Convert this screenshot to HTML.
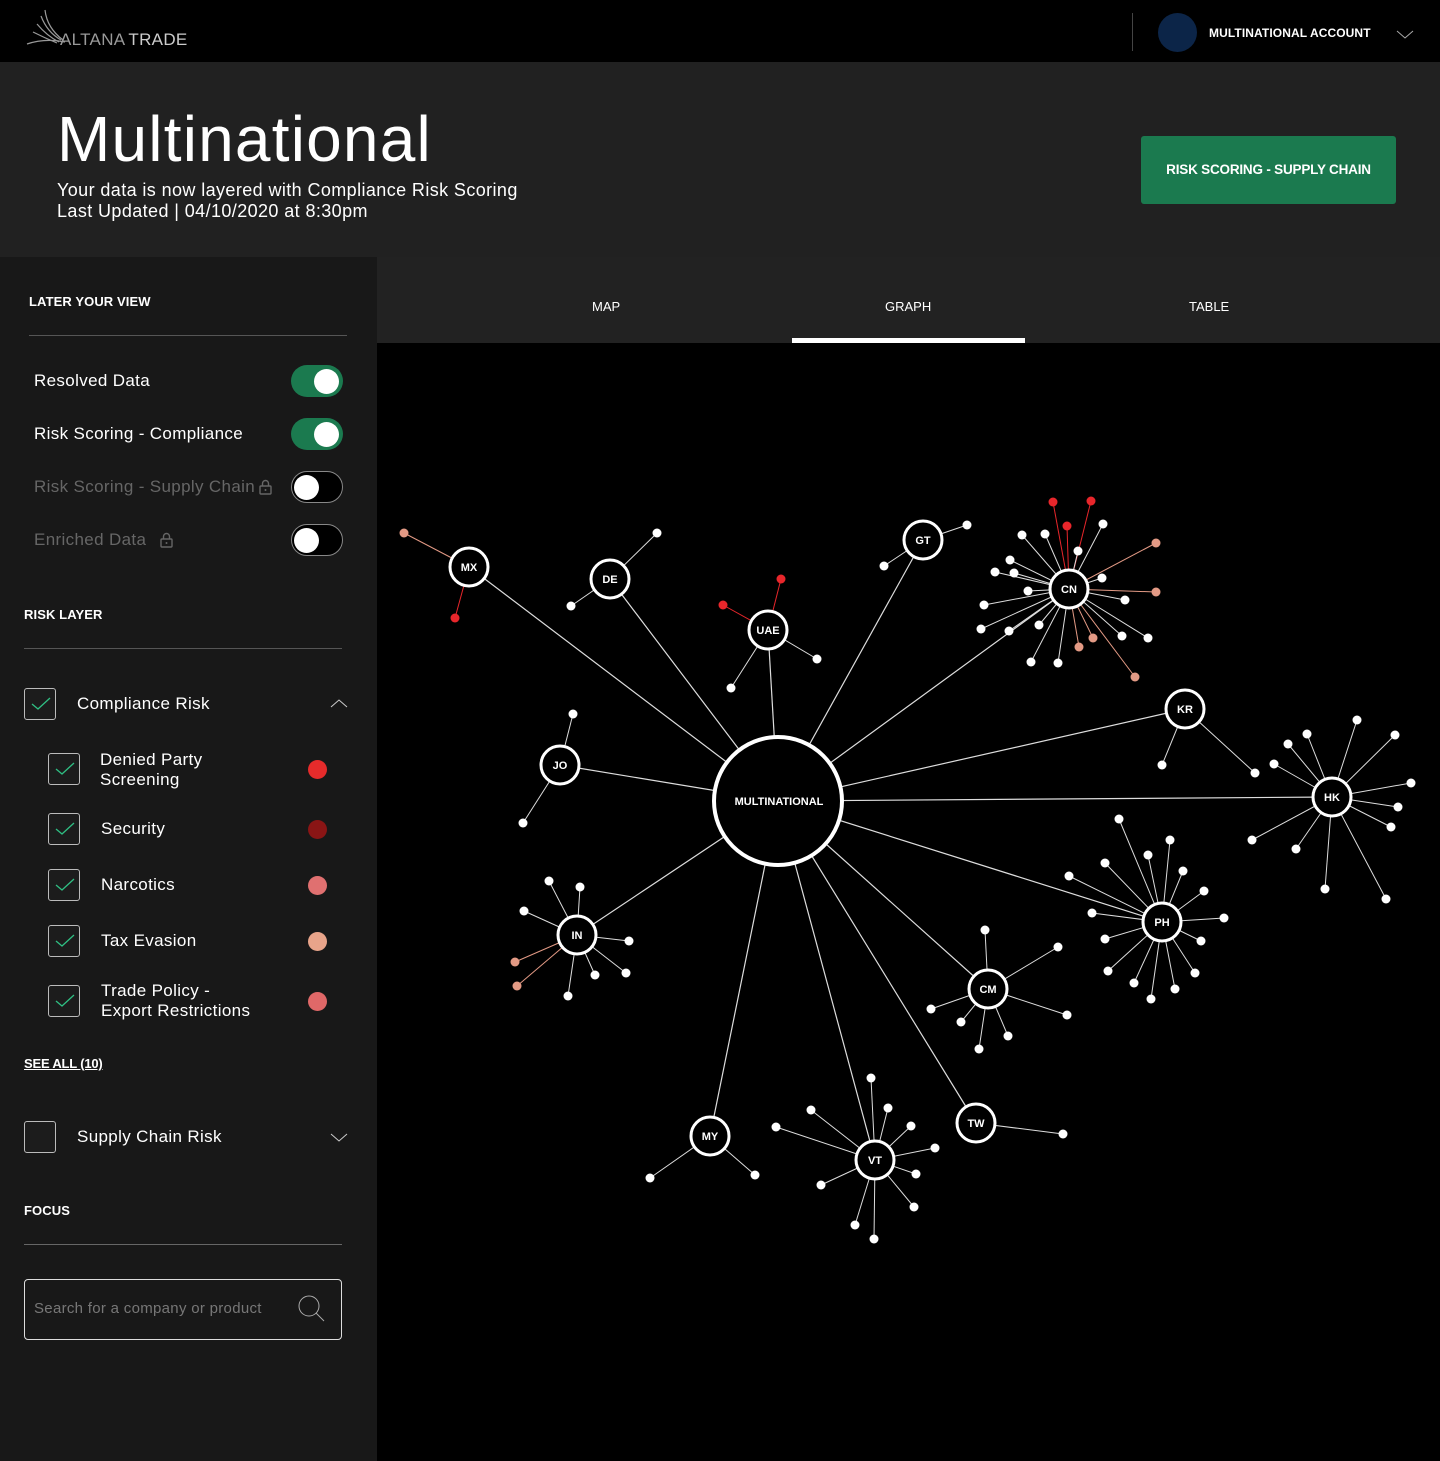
<!DOCTYPE html>
<html><head><meta charset="utf-8"><style>
*{margin:0;padding:0;box-sizing:border-box}
body{width:1440px;height:1461px;background:#000;font-family:"Liberation Sans",sans-serif;color:#fff;position:relative;overflow:hidden}
.a{position:absolute}
.t{font-size:17px;letter-spacing:0.35px}
.cb{position:absolute;width:32px;height:32px;border:1.5px solid #bbb;border-radius:3px;background:#1c1c1c}
.cb svg{position:absolute;left:6px;top:8px}
.dot{position:absolute;width:19px;height:19px;border-radius:50%}
.tg{position:absolute;width:52px;height:32px;border-radius:16px}
.tg i{position:absolute;top:4px;width:25px;height:25px;border-radius:50%;background:#fff}
.h{font-weight:bold;font-size:13px;letter-spacing:.1px}
.ln{position:absolute;height:1px;background:#555}
</style></head><body>
<div class="a" style="left:0;top:0;width:1440px;height:62px;background:#000"></div>
<svg class="a" style="left:25px;top:8px" width="45" height="40" viewBox="0 0 45 40"><g fill="none" stroke="#999" stroke-width="1.2"><path d="M2 36 Q20 30 40 34"/><path d="M20 2 Q22 20 38 32"/><path d="M16 8 Q22 24 36 32"/><path d="M12 16 Q22 28 34 34"/><path d="M8 24 Q20 30 32 35"/></g></svg>
<div class="a" style="left:60px;top:30px;font-size:17px;color:#999;letter-spacing:0.3px">ALTANA<span style="color:#ccc;margin-left:3px">TRADE</span></div>
<div class="a" style="left:1132px;top:13px;width:1px;height:38px;background:#444"></div>
<div class="a" style="left:1158px;top:13px;width:39px;height:39px;border-radius:50%;background:#0c2548"></div>
<div class="a h" style="left:1209px;top:26px;font-size:12px">MULTINATIONAL ACCOUNT</div>
<svg class="a" style="left:1396px;top:30px" width="18" height="10"><path d="M1 1 L9 8 L17 1" stroke="#aaa" fill="none"/></svg>
<div class="a" style="left:0;top:62px;width:1440px;height:195px;background:#212121"></div>
<div class="a" style="left:57px;top:101px;font-size:64px;line-height:76px;letter-spacing:1.2px">Multinational</div>
<div class="a" style="left:57px;top:180px;font-size:18px;line-height:21px;letter-spacing:0.4px">Your data is now layered with Compliance Risk Scoring<br>Last Updated | 04/10/2020 at 8:30pm</div>
<div class="a" style="left:1141px;top:136px;width:255px;height:68px;background:#1b7a4f;border-radius:3px;font-weight:bold;font-size:13.5px;text-align:center;line-height:68px;letter-spacing:-0.2px">RISK SCORING - SUPPLY CHAIN</div>
<div class="a" style="left:0;top:257px;width:377px;height:1204px;background:#181818"></div>
<div class="a h" style="left:29px;top:294px">LATER YOUR VIEW</div>
<div class="ln" style="left:29px;top:335px;width:318px"></div>
<div class="a t" style="left:34px;top:371px">Resolved Data</div>
<div class="tg" style="left:291px;top:365px;background:#1b7a4f"><i style="left:23px"></i></div>
<div class="a t" style="left:34px;top:424px">Risk Scoring - Compliance</div>
<div class="tg" style="left:291px;top:418px;background:#1b7a4f"><i style="left:23px"></i></div>
<div class="a t" style="left:34px;top:477px;color:#666">Risk Scoring - Supply Chain</div>
<svg class="a" style="left:259px;top:479px" width="13" height="16"><path d="M3.5 7 V4.5 A3 3 0 0 1 9.5 4.5 V7" stroke="#666" fill="none" stroke-width="1.4"/><rect x="1" y="7" width="11" height="8" rx="1" stroke="#666" fill="none" stroke-width="1.4"/><circle cx="6.5" cy="11" r="1" fill="#666"/></svg>
<div class="tg" style="left:291px;top:471px;background:#000;border:1px solid #888"><i style="left:2px;top:3px"></i></div>
<div class="a t" style="left:34px;top:530px;color:#666">Enriched Data</div>
<svg class="a" style="left:160px;top:532px" width="13" height="16"><path d="M3.5 7 V4.5 A3 3 0 0 1 9.5 4.5 V7" stroke="#666" fill="none" stroke-width="1.4"/><rect x="1" y="7" width="11" height="8" rx="1" stroke="#666" fill="none" stroke-width="1.4"/><circle cx="6.5" cy="11" r="1" fill="#666"/></svg>
<div class="tg" style="left:291px;top:524px;background:#000;border:1px solid #888"><i style="left:2px;top:3px"></i></div>
<div class="a h" style="left:24px;top:607px">RISK LAYER</div>
<div class="ln" style="left:24px;top:648px;width:318px"></div>
<div class="cb" style="left:24px;top:688px"><svg width="20" height="14"><path d="M1 7 L7 12 L19 1" stroke="#2fbf83" fill="none" stroke-width="1.3"/></svg></div>
<div class="a t" style="left:77px;top:694px">Compliance Risk</div>
<svg class="a" style="left:330px;top:698px" width="18" height="10"><path d="M1 9 L9 2 L17 9" stroke="#ccc" fill="none"/></svg>
<div class="cb" style="left:48px;top:753px"><svg width="20" height="14"><path d="M1 7 L7 12 L19 1" stroke="#2fbf83" fill="none" stroke-width="1.3"/></svg></div>
<div class="a t" style="left:100px;top:750px;line-height:20px">Denied Party<br>Screening</div>
<div class="dot" style="left:308px;top:760px;background:#e62b2b"></div>
<div class="cb" style="left:48px;top:813px"><svg width="20" height="14"><path d="M1 7 L7 12 L19 1" stroke="#2fbf83" fill="none" stroke-width="1.3"/></svg></div>
<div class="a t" style="left:101px;top:819px">Security</div>
<div class="dot" style="left:308px;top:820px;background:#8a1515"></div>
<div class="cb" style="left:48px;top:869px"><svg width="20" height="14"><path d="M1 7 L7 12 L19 1" stroke="#2fbf83" fill="none" stroke-width="1.3"/></svg></div>
<div class="a t" style="left:101px;top:875px">Narcotics</div>
<div class="dot" style="left:308px;top:876px;background:#e07070"></div>
<div class="cb" style="left:48px;top:925px"><svg width="20" height="14"><path d="M1 7 L7 12 L19 1" stroke="#2fbf83" fill="none" stroke-width="1.3"/></svg></div>
<div class="a t" style="left:101px;top:931px">Tax Evasion</div>
<div class="dot" style="left:308px;top:932px;background:#e8a48a"></div>
<div class="cb" style="left:48px;top:985px"><svg width="20" height="14"><path d="M1 7 L7 12 L19 1" stroke="#2fbf83" fill="none" stroke-width="1.3"/></svg></div>
<div class="a t" style="left:101px;top:981px;line-height:20px">Trade Policy -<br>Export Restrictions</div>
<div class="dot" style="left:308px;top:992px;background:#e06868"></div>
<div class="a h" style="left:24px;top:1056px;text-decoration:underline;letter-spacing:-0.2px">SEE ALL (10)</div>
<div class="cb" style="left:24px;top:1121px"></div>
<div class="a t" style="left:77px;top:1127px">Supply Chain Risk</div>
<svg class="a" style="left:330px;top:1133px" width="18" height="10"><path d="M1 1 L9 8 L17 1" stroke="#ccc" fill="none"/></svg>
<div class="a h" style="left:24px;top:1203px">FOCUS</div>
<div class="ln" style="left:24px;top:1244px;width:318px;background:#666"></div>
<div class="a" style="left:24px;top:1279px;width:318px;height:61px;border:1.5px solid #ddd;border-radius:4px"></div>
<div class="a" style="left:34px;top:1300px;font-size:15px;color:#777;letter-spacing:0.3px">Search for a company or product</div>
<svg class="a" style="left:297px;top:1294px" width="30" height="28"><circle cx="12" cy="12" r="10" stroke="#aaa" fill="none"/><path d="M19 19 L27 27" stroke="#aaa"/></svg>
<div class="a" style="left:377px;top:257px;width:1063px;height:86px;background:#222"></div>
<div class="a" style="left:592px;top:299px;font-size:13px">MAP</div>
<div class="a" style="left:885px;top:299px;font-size:13px">GRAPH</div>
<div class="a" style="left:1189px;top:299px;font-size:13px">TABLE</div>
<div class="a" style="left:792px;top:338px;width:233px;height:5px;background:#fff"></div>
<svg class="a" style="left:0;top:0" width="1440" height="1461" id="g"></svg>
<script>
var C=[778,801];
var hubs={MX:[469,567,[[404,533,'s'],[455,618,'r']]],DE:[610,579,[[657,533],[571,606]]],UAE:[768,630,[[723,605,'r'],[781,579,'r'],[731,688],[817,659]]],GT:[923,540,[[967,525],[884,566]]],
CN:[1069,589,[[1053,502,'r'],[1091,501,'r'],[1067,526,'r'],[1103,524],[1045,534],[1022,535],[1010,560],[995,572],[1014,573],[1028,591],[984,605],[1078,551],[1156,543,'s'],[1156,592,'s'],[1135,677,'s'],[1079,647,'s'],[1093,638,'s'],[1122,636],[1148,638],[1125,600],[1102,578],[1031,662],[1058,663],[981,629],[1009,631],[1039,625]]],
KR:[1185,709,[[1162,765],[1255,773]]],
HK:[1332,797,[[1357,720],[1395,735],[1411,783],[1398,807],[1391,827],[1386,899],[1325,889],[1296,849],[1252,840],[1274,764],[1288,744],[1307,734]]],
PH:[1162,922,[[1119,819],[1148,855],[1170,840],[1183,871],[1204,891],[1224,918],[1201,941],[1195,973],[1175,989],[1151,999],[1134,983],[1108,971],[1105,939],[1092,913],[1069,876],[1105,863]]],
CM:[988,989,[[985,930],[1058,947],[1067,1015],[1008,1036],[979,1049],[961,1022],[931,1009]]],
TW:[976,1123,[[1063,1134]]],
VT:[875,1160,[[871,1078],[888,1108],[911,1126],[935,1148],[916,1174],[914,1207],[874,1239],[855,1225],[821,1185],[776,1127],[811,1110]]],
MY:[710,1136,[[650,1178],[755,1175]]],
IN:[577,935,[[549,881],[580,887],[524,911],[629,941],[626,973],[595,975],[568,996],[517,986,'s'],[515,962,'s']]],
JO:[560,765,[[573,714],[523,823]]]};
var col={r:'#e8262b',s:'#e39a85'};
var L='',N='';
for(var k in hubs){var h=hubs[k];L+='<line x1="'+C[0]+'" y1="'+C[1]+'" x2="'+h[0]+'" y2="'+h[1]+'" stroke="#ddd" stroke-width="1.2"/>';
h[2].forEach(function(p){var c=p[2]?col[p[2]]:'#fff';L+='<line x1="'+h[0]+'" y1="'+h[1]+'" x2="'+p[0]+'" y2="'+p[1]+'" stroke="'+(p[2]?c:'#ddd')+'" stroke-width="1"/>';N+='<circle cx="'+p[0]+'" cy="'+p[1]+'" r="4.5" fill="'+c+'"/>';});
N+='<circle cx="'+h[0]+'" cy="'+h[1]+'" r="19" fill="#000" stroke="#fff" stroke-width="3"/><text x="'+h[0]+'" y="'+(h[1]+4)+'" fill="#fff" font-size="11" font-weight="bold" text-anchor="middle" font-family="Liberation Sans">'+k+'</text>';}
N+='<circle cx="778" cy="801" r="64" fill="#000" stroke="#fff" stroke-width="4"/><text x="779" y="805" fill="#fff" font-size="11" font-weight="bold" text-anchor="middle" font-family="Liberation Sans">MULTINATIONAL</text>';
document.getElementById('g').innerHTML=L+N;
</script>
</body></html>
